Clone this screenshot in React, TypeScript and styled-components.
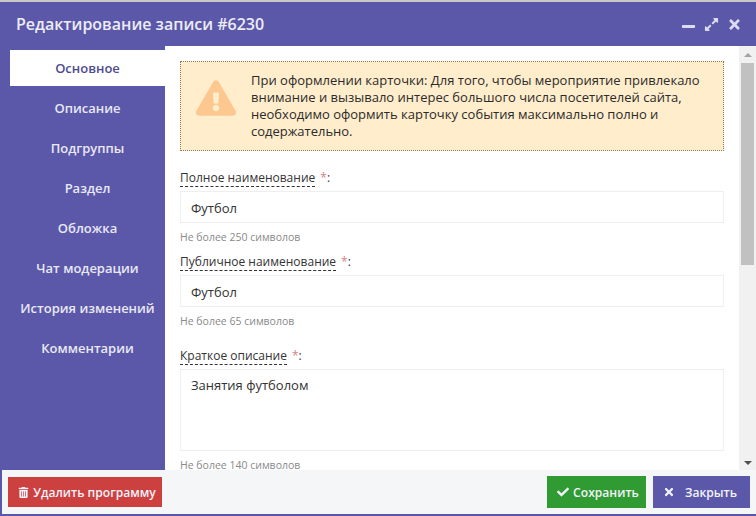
import styled, { createGlobalStyle } from "styled-components";
import { FaCheck, FaExclamationTriangle, FaExpandAlt, FaMinus, FaTimes, FaTrashAlt } from "react-icons/fa";

const GlobalStyle = createGlobalStyle`
    html, body {
        margin: 0;
        padding: 0;
        background-color: #c8c8c8;
        font-family: "Open Sans", "Liberation Sans", sans-serif;
    }
    * {
        box-sizing: border-box;
    }
`;

const Dialog = styled.div`
    width: 756px;
    height: 514px;
    margin-top: 2px;
    padding-bottom: 2px;
    background-color: #5b58a9;
    display: flex;
    flex-direction: column;
    overflow: hidden;
`;

const TitleBar = styled.div`
    height: 44px;
    flex: none;
    display: flex;
    align-items: center;
    justify-content: space-between;
    padding: 0 14px 0 16px;
    color: #edecf6;
`;

const Title = styled.h1`
    margin: 0;
    font-size: 16px;
    font-weight: 600;
`;

const WindowIcons = styled.div`
    display: flex;
    align-items: center;
    gap: 8px;
    color: #dcdcf0;
    font-size: 15px;
    svg {
        display: block;
    }
    svg:first-child {
        margin-top: 5px;
    }
`;

const Body = styled.div`
    flex: 1;
    min-height: 0;
    display: flex;
`;

const Sidebar = styled.nav`
    width: 165px;
    flex: none;
    padding: 4px 0 0 10px;
    display: flex;
    flex-direction: column;
    gap: 4px;
`;

const Tab = styled.div<{ $active?: boolean }>`
    height: 36px;
    display: flex;
    align-items: center;
    justify-content: center;
    white-space: nowrap;
    font-size: 13px;
    font-weight: 600;
    color: ${(p) => (p.$active ? "#4d4b8f" : "#e9e8f5")};
    background-color: ${(p) => (p.$active ? "#ffffff" : "transparent")};
`;

const Content = styled.div`
    flex: 1;
    min-width: 0;
    display: flex;
    background-color: #ffffff;
`;

const Form = styled.div`
    flex: 1;
    min-width: 0;
    padding: 15px 15px 0;
    overflow: hidden;
`;

const Alert = styled.div`
    height: 90px;
    flex: none;
    display: flex;
    align-items: center;
    background-color: #ffedcc;
    border: 1px dotted #8a7a5a;
    margin-bottom: 19px;
`;

const AlertIcon = styled.div`
    width: 70px;
    flex: none;
    display: flex;
    justify-content: center;
    padding-bottom: 16px;
    color: #fdc88f;
    font-size: 40px;
    svg {
        display: block;
    }
`;

const AlertText = styled.p`
    margin: 0;
    font-size: 13px;
    line-height: 17px;
    color: #2b2b2b;
`;

const Field = styled.div<{ $gap?: number }>`
    margin-bottom: ${(p) => p.$gap ?? 0}px;
`;

const Label = styled.div`
    height: 14px;
    padding-top: 1px;
    line-height: 14px;
    font-size: 12px;
    color: #333333;
    margin-bottom: 7px;
`;

const Dashed = styled.span`
    border-bottom: 1px dashed #333333;
`;

const Star = styled.span`
    color: #d97f86;
    margin-left: 5px;
`;

const TextBox = styled.div<{ $tall?: boolean }>`
    height: ${(p) => (p.$tall ? "82px" : "32px")};
    padding: ${(p) => (p.$tall ? "6px 10px" : "1px 10px 0")};
    display: flex;
    align-items: ${(p) => (p.$tall ? "flex-start" : "center")};
    border: 1px solid #eceef0;
    font-size: 13px;
    line-height: 18px;
    color: #333333;
`;

const Hint = styled.div`
    margin-top: 7px;
    height: 14px;
    line-height: 14px;
    font-size: 10.5px;
    color: #8a8a8a;
`;

const Scrollbar = styled.div`
    width: 17px;
    flex: none;
    background-color: #f1f1f1;
    display: flex;
    flex-direction: column;
    align-items: center;
    justify-content: space-between;
    padding: 7px 0 5px;
`;

const Arrow = styled.div<{ $down?: boolean }>`
    width: 0;
    height: 0;
    border-left: 4px solid transparent;
    border-right: 4px solid transparent;
    border-bottom: ${(p) => (p.$down ? "none" : "4px solid #a3a3a3")};
    border-top: ${(p) => (p.$down ? "4px solid #505050" : "none")};
`;

const Thumb = styled.div`
    position: absolute;
    top: 6px;
    left: 2px;
    width: 13px;
    height: 202px;
    background-color: #c1c1c1;
`;

const Track = styled.div`
    position: relative;
    flex: 1;
    width: 17px;
`;

const Footer = styled.div`
    height: 44px;
    flex: none;
    margin-left: 2px;
    display: flex;
    align-items: center;
    justify-content: space-between;
    padding: 0 6px;
    background-color: #f5f6f8;
`;

const Actions = styled.div`
    display: flex;
    gap: 7px;
`;

const Button = styled.button<{ $color: string; $width: number; $height?: number; $gap?: number; $pad?: string }>`
    width: ${(p) => p.$width}px;
    height: ${(p) => p.$height ?? 32}px;
    display: flex;
    align-items: center;
    justify-content: center;
    gap: ${(p) => p.$gap ?? 4}px;
    border: none;
    padding: ${(p) => p.$pad ?? "0"};
    background-color: ${(p) => p.$color};
    color: #f2f2fa;
    font-family: inherit;
    font-size: 12.1px;
    font-weight: 600;
    svg {
        display: block;
    }
`;

const tabs = ["Основное", "Описание", "Подгруппы", "Раздел", "Обложка", "Чат модерации", "История изменений", "Комментарии"];

export default function App() {
    return (
        <>
            <GlobalStyle />
            <Dialog>
                <TitleBar>
                    <Title>Редактирование записи #6230</Title>
                    <WindowIcons>
                        <FaMinus />
                        <FaExpandAlt />
                        <FaTimes />
                    </WindowIcons>
                </TitleBar>
                <Body>
                    <Sidebar>
                        {tabs.map((t, i) => (
                            <Tab key={t} $active={i === 0}>{t}</Tab>
                        ))}
                    </Sidebar>
                    <Content>
                        <Form>
                            <Alert>
                                <AlertIcon><FaExclamationTriangle /></AlertIcon>
                                <AlertText>
                                    При оформлении карточки: Для того, чтобы мероприятие привлекало внимание и вызывало интерес большого числа посетителей сайта, необходимо оформить карточку события максимально полно и содержательно.
                                </AlertText>
                            </Alert>
                            <Field $gap={10}>
                                <Label><Dashed>Полное наименование</Dashed><Star>*</Star>:</Label>
                                <TextBox>Футбол</TextBox>
                                <Hint>Не более 250 символов</Hint>
                            </Field>
                            <Field $gap={20}>
                                <Label><Dashed>Публичное наименование</Dashed><Star>*</Star>:</Label>
                                <TextBox>Футбол</TextBox>
                                <Hint>Не более 65 символов</Hint>
                            </Field>
                            <Field>
                                <Label><Dashed>Краткое описание</Dashed><Star>*</Star>:</Label>
                                <TextBox $tall>Занятия футболом</TextBox>
                                <Hint>Не более 140 символов</Hint>
                            </Field>
                        </Form>
                        <Scrollbar>
                            <Arrow />
                            <Track><Thumb /></Track>
                            <Arrow $down />
                        </Scrollbar>
                    </Content>
                </Body>
                <Footer>
                    <Button $color="#cd4040" $width={154} $height={30} $pad="0 0 0 4px"><FaTrashAlt size={11} />Удалить программу</Button>
                    <Actions>
                        <Button $color="#2f9b32" $width={99} $pad="0 0 0 3px"><FaCheck size={12} />Сохранить</Button>
                        <Button $color="#5b58a9" $width={97} $gap={10} $pad="0 3px 0 0"><FaTimes size={12} />Закрыть</Button>
                    </Actions>
                </Footer>
            </Dialog>
        </>
    );
}
